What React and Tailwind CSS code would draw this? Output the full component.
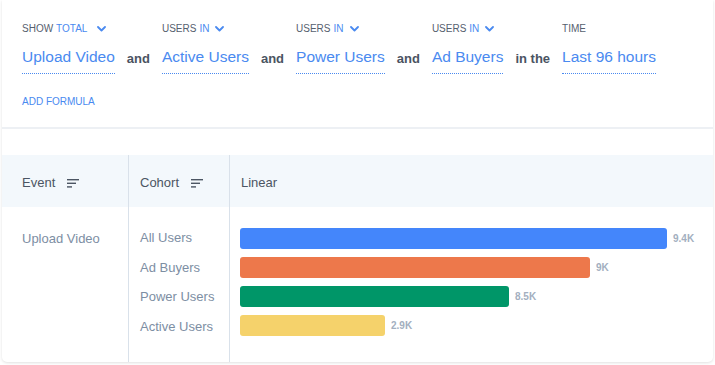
import React from 'react'

const Chevron = () => (
  <svg width="9" height="6" viewBox="0 0 9 6" fill="none" className="ml-[6px]">
    <path d="M1 1l3.5 3.5L8 1" stroke="#4a8af0" strokeWidth="1.8" strokeLinecap="round" strokeLinejoin="round" />
  </svg>
)

const SortIcon = () => (
  <svg width="12" height="9" viewBox="0 0 12 9" fill="none" className="ml-[12px]">
    <rect x="0" y="0" width="12" height="1.4" fill="#4b5563" />
    <rect x="0" y="3.6" width="9" height="1.4" fill="#4b5563" />
    <rect x="0" y="7.2" width="5" height="1.4" fill="#4b5563" />
  </svg>
)

const filters = [
  { label: 'SHOW', accent: 'TOTAL', value: 'Upload Video', wide: true },
  { join: 'and' },
  { label: 'USERS', accent: 'IN', value: 'Active Users' },
  { join: 'and' },
  { label: 'USERS', accent: 'IN', value: 'Power Users' },
  { join: 'and' },
  { label: 'USERS', accent: 'IN', value: 'Ad Buyers' },
  { join: 'in the' },
  { label: 'TIME', value: 'Last 96 hours', noChevron: true },
]

const rows = [
  { name: 'All Users', width: 427, color: 'bg-[#4486fb]', value: '9.4K' },
  { name: 'Ad Buyers', width: 350, color: 'bg-[#ed784b]', value: '9K' },
  { name: 'Power Users', width: 269, color: 'bg-[#009668]', value: '8.5K' },
  { name: 'Active Users', width: 145, color: 'bg-[#f5d26b]', value: '2.9K' },
]

export default function App() {
  return (
    <div className="w-[715px] h-[365px] bg-white pt-0 px-[2px] font-['Liberation_Sans',Arial,sans-serif]">
      <div className="h-[362px] rounded-b-[5px] bg-white shadow-[0_1px_3px_rgba(0,0,0,0.12)] flex flex-col overflow-hidden">
        {/* query builder */}
        <div className="h-[129px] border-b-2 border-[#edf0f4] px-[20px] pt-[23px]">
          <div className="flex items-start gap-[12px]">
            {filters.map((f, i) =>
              f.join ? (
                <div key={i} className="pt-[29px] text-[13px] font-bold text-[#4a5462] leading-none">{f.join}</div>
              ) : (
                <div key={i} className="flex flex-col">
                  <div className="flex items-center h-[12px] text-[10px] text-[#56606e] leading-none">
                    <span>{f.label}</span>
                    {f.accent && <span className="ml-[3px] text-[#4a8af0]">{f.accent}</span>}
                    {!f.noChevron && <span className={f.wide ? 'ml-[4px]' : ''}><Chevron /></span>}
                  </div>
                  <div className="mt-[13px] text-[15.5px] leading-[18px] text-[#4a8af0] pb-[7px] border-b border-dotted border-[#4a8af0]">
                    {f.value}
                  </div>
                </div>
              )
            )}
          </div>
          <div className="mt-[23px] text-[10px] text-[#4a8af0] leading-none">ADD FORMULA</div>
        </div>

        {/* table */}
        <div className="mt-[26px] flex flex-1">
          <div className="w-[127px] border-r border-[#d9e1ea] flex flex-col">
            <div className="h-[52px] bg-[#f3f8fc] flex items-center pl-[20px] pt-[4px] text-[13px] text-[#4b5563]">
              Event <SortIcon />
            </div>
            <div className="pl-[20px] pt-[22px] text-[13px] text-[#7d8ea3]">Upload Video</div>
          </div>
          <div className="w-[101px] border-r border-[#d9e1ea] flex flex-col">
            <div className="h-[52px] bg-[#f3f8fc] flex items-center pl-[11px] pt-[4px] text-[13px] text-[#4b5563]">
              Cohort <SortIcon />
            </div>
            <div className="pl-[11px] pt-[23px] flex flex-col gap-[14px] text-[13px] leading-[15.5px] text-[#7d8ea3]">
              {rows.map(r => (
                <div key={r.name}>{r.name}</div>
              ))}
            </div>
          </div>
          <div className="flex-1 flex flex-col">
            <div className="h-[52px] bg-[#f3f8fc] flex items-center pl-[11px] pt-[4px] text-[13px] text-[#4b5563]">Linear</div>
            <div className="pl-[10px] pt-[21px] flex flex-col gap-[8px]">
              {rows.map(r => (
                <div key={r.name} className="flex items-center">
                  <div className={`${r.color} h-[21px] rounded-[3px]`} style={{ width: r.width }} />
                  <span className="ml-[6px] text-[10px] font-bold text-[#a3afc0]">{r.value}</span>
                </div>
              ))}
            </div>
          </div>
        </div>
      </div>
    </div>
  )
}
